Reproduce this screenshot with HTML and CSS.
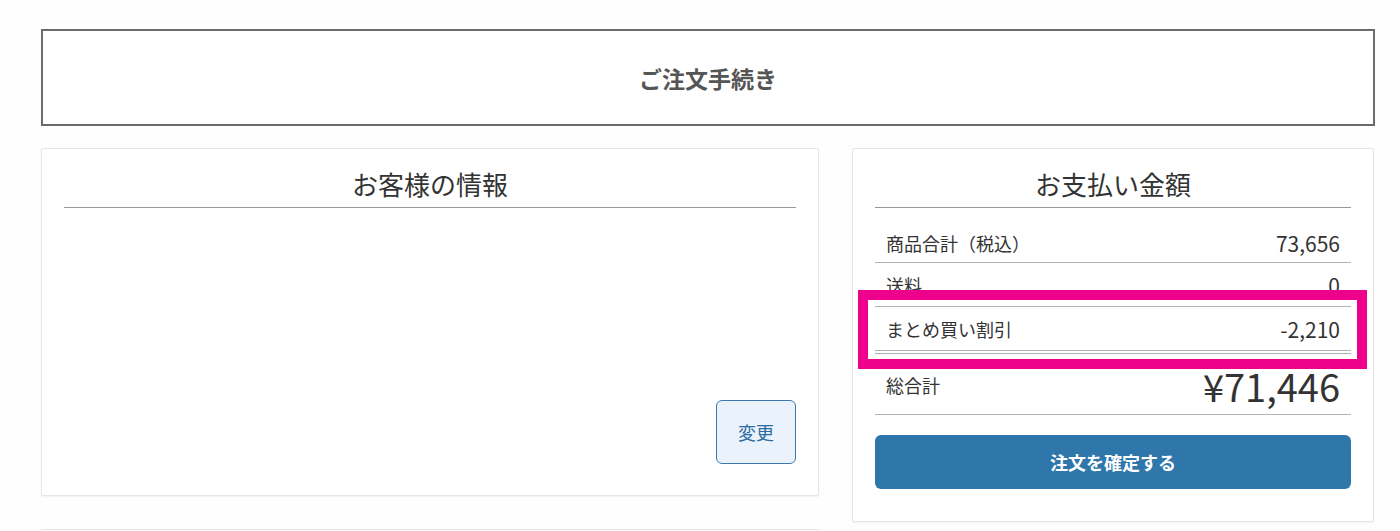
FILE: index.html
```html
<!DOCTYPE html>
<html lang="ja">
<head>
<meta charset="utf-8">
<title>ご注文手続き</title>
<link rel="stylesheet" href="styles.css">
</head>
<body>
<div class="page">
  <header class="page-header">ご注文手続き</header>
  <main class="layout">
    <div class="col-main">
      <section class="card customer">
        <h2 class="card-title">お客様の情報</h2>
        <div class="customer-body"></div>
        <div class="customer-actions">
          <button class="btn-change" type="button">変更</button>
        </div>
      </section>
      <section class="card next-card"></section>
    </div>
    <aside class="card summary">
      <h2 class="card-title">お支払い金額</h2>
      <ul class="rows">
        <li class="row first"><span class="label">商品合計（税込）</span><span class="num">73,656</span></li>
        <li class="row"><span class="label">送料</span><span class="num">0</span></li>
        <li class="row discount"><span class="label">まとめ買い割引</span><span class="num">-2,210</span></li>
        <li class="row total"><span class="label">総合計</span><span class="total-num">¥71,446</span></li>
      </ul>
      <button class="btn-confirm" type="button">注文を確定する</button>
      <div class="highlight"></div>
    </aside>
  </main>
</div>
</body>
</html>
```

FILE: styles.css
```css
* { box-sizing: border-box; }
html, body { margin: 0; padding: 0; }
body {
  background: #fefefe;
  font-family: "Noto Sans CJK JP", "Noto Sans", sans-serif;
  color: #333;
  overflow: hidden;
}
.page {
  padding: 29px 25px 0 41px;
}
.page-header {
  height: 97px;
  border: 2px solid #6b6b6b;
  display: flex;
  align-items: center;
  justify-content: center;
  font-size: 23px;
  font-weight: bold;
  color: #555;
  background: #fff;
}
.layout {
  margin-top: 22px;
  display: grid;
  grid-template-columns: 778px 522px;
  column-gap: 33px;
  align-items: start;
}
.col-main {
  display: flex;
  flex-direction: column;
  gap: 33px;
}
.card {
  background: #fff;
  border: 1px solid #e6e6e6;
  border-radius: 2px;
  box-shadow: 0 1px 2px rgba(0,0,0,0.06);
  padding: 0 22px;
}
.card-title {
  margin: 0;
  padding: 19px 0 8px;
  font-size: 26px;
  line-height: 31px;
  font-weight: normal;
  text-align: center;
  color: #333;
  border-bottom: 1px solid #999;
}
.customer {
  height: 348px;
  display: flex;
  flex-direction: column;
}
.customer-body { flex: 1; }
.customer-actions {
  display: flex;
  justify-content: flex-end;
  padding-bottom: 31px;
}
.btn-change {
  width: 80px;
  height: 64px;
  background: #eaf3fb;
  border: 1px solid #3a78b5;
  border-radius: 6px;
  color: #2d6ca3;
  font-family: inherit;
  font-size: 18px;
  padding: 0;
}
.next-card {
  height: 100px;
}
.summary {
  position: relative;
  padding-bottom: 32px;
}
.rows {
  list-style: none;
  margin: 0;
  padding: 0;
}
.row {
  display: flex;
  justify-content: space-between;
  align-items: center;
  padding: 11px 11px 10px 11px;
  line-height: 22px;
  border-bottom: 1px solid #b5b5b5;
  font-size: 18px;
}
.row.first { padding-top: 24px; padding-bottom: 8px; }
.row.discount { border-bottom: 4px double #b0b0b0; }
.num { font-size: 21px; }
.row.total {
  padding-top: 9px;
  padding-bottom: 6px;
  line-height: 45px;
}
.total-num {
  font-size: 38px;
  line-height: 45px;
}
.btn-confirm {
  display: block;
  width: 100%;
  height: 54px;
  margin-top: 20px;
  background: #2f77aa;
  border: none;
  border-radius: 6px;
  color: #fff;
  font-family: inherit;
  font-size: 18px;
  font-weight: bold;
}
.highlight {
  position: absolute;
  left: 5px;
  top: 141px;
  width: 509px;
  height: 79px;
  border: 10px solid #ec008c;
  pointer-events: none;
}
```
